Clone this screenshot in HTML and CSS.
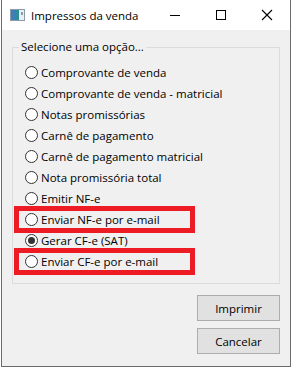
FILE: index.html
```html
<!DOCTYPE html>
<html>
<head>
    <title>Impressos da venda</title>
    <link rel="stylesheet" href="styles.css">
</head>
<body>
    <div class="window">
        <div class="titlebar">
            <svg class="app-icon" width="15" height="12" viewBox="0 0 15 12">
                <rect x="0.5" y="0.5" width="14" height="11" fill="#dfe6ea" stroke="#8a9aa6"/>
                <rect x="1" y="1" width="8" height="10" fill="#2f8a9c"/>
                <rect x="1" y="1" width="4" height="10" fill="#3f7fb8"/>
                <rect x="9" y="1" width="5" height="10" fill="#e9eef1"/>
                <rect x="11" y="3" width="2" height="3" fill="#7ea3a0"/>
            </svg>
            <span class="title">Impressos da venda</span>
            <div class="controls">
                <svg width="46" height="30" viewBox="0 0 46 30"><line x1="18" y1="15.5" x2="28" y2="15.5" stroke="#000"/></svg>
                <svg width="46" height="30" viewBox="0 0 46 30"><rect x="18.5" y="10.5" width="9" height="9" fill="none" stroke="#000"/></svg>
                <svg width="46" height="30" viewBox="0 0 46 30"><path d="M18 10 L28 20 M28 10 L18 20" stroke="#000" stroke-width="1.1"/></svg>
            </div>
        </div>

        <div class="content">
            <fieldset class="groupbox">
                <legend>Selecione uma opção...</legend>
                <div class="options">
                    <div class="option"><span class="radio"></span>Comprovante de venda</div>
                    <div class="option"><span class="radio"></span>Comprovante de venda - matricial</div>
                    <div class="option"><span class="radio"></span>Notas promissórias</div>
                    <div class="option"><span class="radio"></span>Carnê de pagamento</div>
                    <div class="option"><span class="radio"></span>Carnê de pagamento matricial</div>
                    <div class="option"><span class="radio"></span>Nota promissória total</div>
                    <div class="option"><span class="radio"></span>Emitir NF-e</div>
                    <div class="option marked"><span class="radio"></span>Enviar NF-e por e-mail</div>
                    <div class="option"><span class="radio checked"></span>Gerar CF-e (SAT)</div>
                    <div class="option marked"><span class="radio"></span>Enviar CF-e por e-mail</div>
                </div>
            </fieldset>

            <div class="buttons">
                <button>Imprimir</button>
                <button>Cancelar</button>
            </div>
        </div>
    </div>
</body>
</html>
```

FILE: styles.css
```css
body {
    margin: 0;
    background: #fff;
    font-family: 'Open Sans', 'Noto Sans', Arial, sans-serif;
    font-size: 11.5px;
    color: #000;
}

.window {
    width: 288px;
    height: 366px;
    margin-left: 1px;
    border: 1px solid #6b6b6b;
    border-top: none;
    background: #f0f0f0;
    display: flex;
    flex-direction: column;
}

.titlebar {
    height: 30px;
    background: #fff;
    display: flex;
    align-items: center;
}

.app-icon {
    margin-left: 8px;
    margin-top: -1px;
}

.title {
    margin-left: 6px;
    flex: 1;
}

.controls {
    display: flex;
}

.controls svg {
    display: block;
}

.content {
    flex: 1;
    padding: 9px 10px 0 10px;
}

.groupbox {
    margin: 0;
    padding: 0 0 11px 0;
    border: 1px solid #dcdcdc;
}

legend {
    margin-left: 6px;
    padding: 0 2px;
    line-height: 16px;
}

.options {
    padding-top: 7px;
}

.option {
    position: relative;
    height: 21px;
    display: flex;
    align-items: center;
    padding-left: 12px;
    gap: 3px;
    white-space: nowrap;
}

.option.marked::after {
    content: '';
    position: absolute;
    left: 1px;
    top: -3px;
    width: 171px;
    height: 17px;
    border: 5px solid #ed1c24;
}

.radio {
    width: 11px;
    height: 11px;
    border: 1px solid #333;
    border-radius: 50%;
    background: #fff;
    display: flex;
    align-items: center;
    justify-content: center;
}

.radio.checked::before {
    content: '';
    width: 7px;
    height: 7px;
    border-radius: 50%;
    background: #333;
}

.buttons {
    margin-top: 11px;
    display: flex;
    flex-direction: column;
    align-items: flex-end;
    gap: 7px;
}

button {
    width: 83px;
    height: 26px;
    background: #e1e1e1;
    border: 1px solid #adadad;
    font-family: inherit;
    font-size: 11.5px;
    color: #000;
    padding: 0;
}
```
